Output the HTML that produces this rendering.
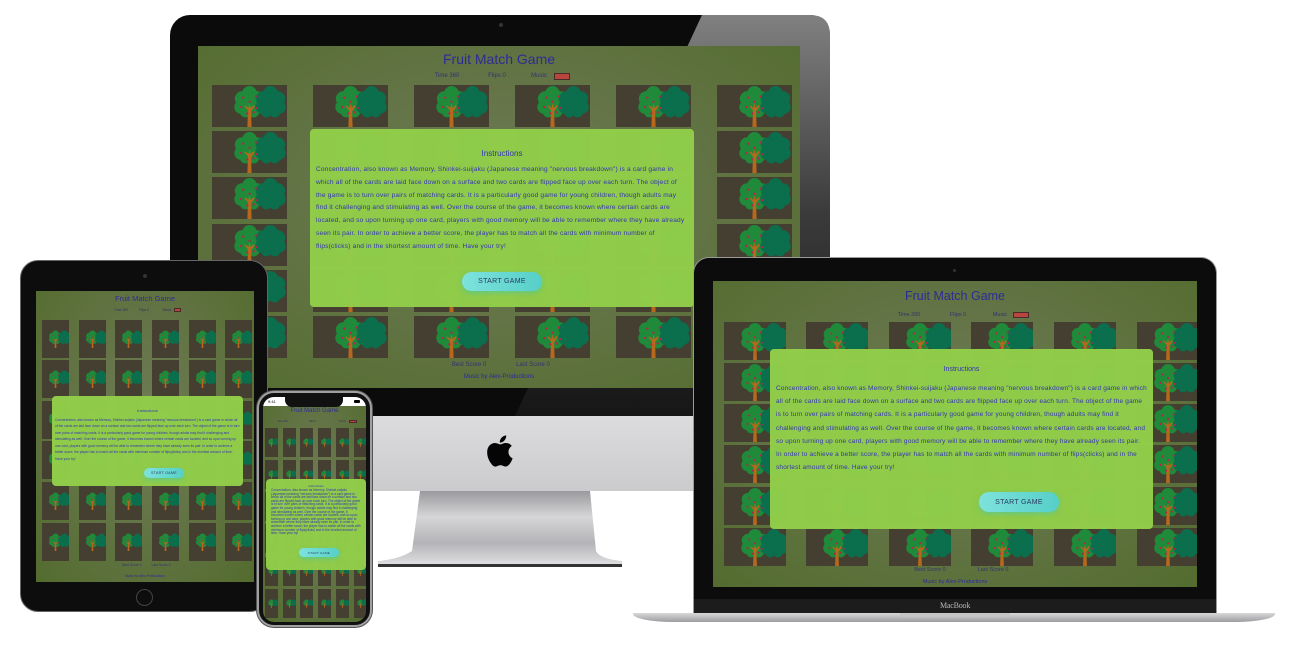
<!DOCTYPE html>
<html><head><meta charset="utf-8">
<style>
*{margin:0;padding:0;box-sizing:border-box}
body{width:1300px;height:650px;background:#fff;position:relative;overflow:hidden;font-family:"Liberation Sans",sans-serif}
.a{position:absolute}
.scr{position:absolute;overflow:hidden;background:radial-gradient(ellipse at 50% 45%,#6f7b55 0%,#637446 45%,#536c2e 100%)}
.card{position:absolute;background:#453f31}
.card svg{position:absolute;left:0;top:0;width:100%;height:100%}
.ov{position:absolute;background:rgba(146,206,74,0.97);border-radius:4px;color:#3434b4}
.t{position:absolute;white-space:nowrap;color:#2c2c96;transform:translateX(-50%)}
.btn{position:absolute;background:linear-gradient(90deg,#7ee2dc,#56cfc8);border-radius:20px;color:#2a3a60;display:flex;align-items:center;justify-content:center;letter-spacing:.3px;box-shadow:0 2px 4px rgba(60,200,190,.5)}
.box{position:absolute;background:#b8463e;border:1px solid #4a2a2a}
</style></head><body>

<div class="a" style="left:170px;top:15px;width:660px;height:401px;background:#0b0b0b;border-radius:20px 20px 0 0"></div>
<svg class="a" style="left:170px;top:15px" width="660" height="401">
<defs><linearGradient id="gl" x1="0" y1="0" x2="0" y2="1"><stop offset="0" stop-color="#808080"/><stop offset=".5" stop-color="#3a3a3a"/><stop offset="1" stop-color="#161616"/></linearGradient></defs>
<path d="M532 0 L640 0 Q660 0 660 20 L660 401 L345 401 Z" fill="url(#gl)"/>
</svg>
<div class="a" style="left:499px;top:23px;width:4px;height:4px;border-radius:50%;background:#333"></div>
<div class="a" style="left:170px;top:416px;width:660px;height:75px;background:linear-gradient(180deg,#dcdcde,#cbcbcd)"></div>
<svg class="a" style="left:483px;top:432px" width="34" height="38" viewBox="0 0 24 24"><path fill="#050505" d="M16.365 1.43c0 1.14-.493 2.27-1.177 3.08-.744.9-1.99 1.570-2.987 1.570-.12 0-.23-.02-.3-.03-.01-.06-.04-.22-.04-.39 0-1.15.572-2.270 1.206-2.980.804-.94 2.142-1.640 3.248-1.680.03.13.05.28.05.43zm4.565 15.71c-.03.07-.463 1.58-1.518 3.12-.945 1.34-1.94 2.710-3.43 2.710-1.517 0-1.9-.88-3.63-.88-1.698 0-2.302.91-3.67.91-1.377 0-2.332-1.26-3.428-2.8-1.287-1.82-2.323-4.63-2.323-7.28 0-4.28 2.797-6.55 5.552-6.55 1.448 0 2.675.95 3.6.95.865 0 2.222-1.01 3.902-1.01.613 0 2.886.06 4.374 2.19-.13.09-2.383 1.37-2.383 4.19 0 3.26 2.854 4.42 2.955 4.45z"/></svg>
<svg class="a" style="left:370px;top:491px" width="260" height="80">
<defs><linearGradient id="st" x1="0" y1="0" x2="0" y2="1"><stop offset="0" stop-color="#9a9a9e"/><stop offset=".35" stop-color="#d6d6d8"/><stop offset=".7" stop-color="#b4b4b8"/><stop offset="1" stop-color="#e0e0e2"/></linearGradient></defs>
<path d="M50 0 L220 0 L226 60 Q230 68 252 70 L252 74 L8 74 L8 70 Q30 68 42 60 Z" fill="url(#st)"/>
<rect x="8" y="73" width="244" height="3" fill="#333"/>
</svg>
<div class="scr" id="s1" style="left:198px;top:46px;width:602px;height:342px"></div>

<div class="a" style="left:20px;top:260px;width:248px;height:352px;background:#0d0d0d;border-radius:18px;border:1px solid #666"></div>
<div class="a" style="left:143px;top:274px;width:4px;height:4px;border-radius:50%;background:#333"></div>
<div class="a" style="left:136px;top:589px;width:17px;height:17px;border-radius:50%;border:1px solid #444"></div>
<div class="scr" id="s2" style="left:36px;top:291px;width:218px;height:291px"></div>

<div class="a" style="left:693px;top:257px;width:524px;height:358px;background:#0c0c0c;border-radius:16px 16px 0 0;border:1px solid #9a9a9a;border-bottom:none"></div>
<div class="a" style="left:953px;top:269px;width:3px;height:3px;border-radius:50%;background:#333"></div>
<div class="a" style="left:694px;top:599px;width:522px;height:15px;background:#1c1c1c"></div>
<div class="a" style="left:940px;top:601px;font-size:8px;color:#b8b8b8;letter-spacing:-.2px;font-family:'Liberation Serif',serif">MacBook</div>
<div class="a" style="left:633px;top:613px;width:642px;height:9px;background:linear-gradient(180deg,#d8d8da,#9c9c9e);border-radius:0 0 40px 40px/0 0 8px 8px"></div>
<div class="a" style="left:900px;top:613px;width:110px;height:4px;background:#c4c4c6;border-radius:0 0 5px 5px"></div>
<div class="scr" id="s3" style="left:713px;top:281px;width:484px;height:306px"></div>

<div class="a" style="left:257px;top:391px;width:115px;height:236px;background:#111;border-radius:17px;border:2px solid #a0a0a0;box-shadow:0 0 0 1px #555"></div>
<div class="scr" id="s4" style="left:263px;top:397px;width:103px;height:225px;border-radius:11px"></div>

<script>
var TXT='Concentration, also known as Memory, Shinkei-suijaku (Japanese meaning "nervous breakdown") is a card game in which all of the cards are laid face down on a surface and two cards are flipped face up over each turn. The object of the game is to turn over pairs of matching cards. It is a particularly good game for young children, though adults may find it challenging and stimulating as well. Over the course of the game, it becomes known where certain cards are located, and so upon turning up one card, players with good memory will be able to remember where they have already seen its pair. In order to achieve a better score, the player has to match all the cards with minimum number of flips(clicks) and in the shortest amount of time. Have your try!';
function tree(par){
 var c=[[20,8,7],[13,13,7],[27,13,7],[12,21,6.5],[28,21,6.5],[20,17,9],[16,26,5],[24,26,5]];
 var L='',R='';
 c.forEach(function(p){L+='<circle cx="'+p[0]+'" cy="'+p[1]+'" r="'+p[2]+'" fill="#1f8a3a"/>';R+='<circle cx="'+p[0]+'" cy="'+p[1]+'" r="'+p[2]+'" fill="#0b6e4c"/>';});
 var d=[[14,12],[20,16],[26,11],[12,21],[27,22],[18,27],[24,26]],D='';
 d.forEach(function(p){D+='<circle cx="'+p[0]+'" cy="'+p[1]+'" r="1.1" fill="#c0204e"/>';});
 return '<svg viewBox="-10 0 60 40" preserveAspectRatio="'+par+' meet">'+L+'<svg x="20" y="0" width="20" height="40" viewBox="20 0 20 40">'+R+'</svg><path d="M18 40 L18.5 24 L15 20 L16 19.5 L19 22 L20 17 L21 22 L24 19 L25 20 L21.5 25 L22 40 Z" fill="#b8681c"/>'+D+'</svg>';
}
var TB=tree('xMidYMax'),TM=tree('xMidYMid');
function build(id,c){
 var s=document.getElementById(id),h='',T=c.mid?TM:TB;
 if(c.status){h+='<div class="a" style="left:0;top:0;width:100%;height:'+c.status+'px;background:#fff"></div><div class="a" style="left:22px;top:0;width:58px;height:'+(c.status+1)+'px;background:#111;border-radius:0 0 7px 7px"></div><div class="a" style="left:5px;top:2px;font-size:4px;color:#000">9:41</div><div class="a" style="left:91px;top:2.5px;width:6px;height:3px;background:#000;border-radius:1px"></div>';}
 c.rows.forEach(function(y){c.cols.forEach(function(x){h+='<div class="card" style="left:'+x+'px;top:'+y+'px;width:'+c.cw+'px;height:'+c.rh+'px">'+T+'</div>';});});
 var m=c.w/2;
 h+='<div class="t" style="left:'+m+'px;top:'+c.ty+'px;font-size:'+c.ts+'px">Fruit Match Game</div>';
 var st=c.st;
 h+='<div class="t" style="left:'+(m+st[0])+'px;top:'+c.sy+'px;font-size:'+c.ss+'px;color:#33336e">Time 360</div>';
 h+='<div class="t" style="left:'+(m+st[1])+'px;top:'+c.sy+'px;font-size:'+c.ss+'px;color:#33336e">Flips 0</div>';
 h+='<div class="t" style="left:'+(m+st[2])+'px;top:'+c.sy+'px;font-size:'+c.ss+'px;color:#33336e">Music</div>';
 h+='<div class="box" style="left:'+(m+st[3])+'px;top:'+(c.sy+c.ss*0.05)+'px;width:'+c.bw+'px;height:'+(c.ss*1.1)+'px"></div>';
 h+='<div class="t" style="left:'+(m+c.bo[0])+'px;top:'+c.by+'px;font-size:'+c.ss+'px;color:#33336e">Best Score 0</div>';
 h+='<div class="t" style="left:'+(m+c.bo[1])+'px;top:'+c.by+'px;font-size:'+c.ss+'px;color:#33336e">Last Score 0</div>';
 h+='<div class="t" style="left:'+m+'px;top:'+c.my+'px;font-size:'+c.ss+'px;color:#2a2aa0">Music by Alex-Productions</div>';
 var o=c.ov;
 h+='<div class="ov" style="left:'+o[0]+'px;top:'+o[1]+'px;width:'+o[2]+'px;height:'+o[3]+'px">'+
 '<div class="t" style="left:50%;top:'+c.iy+'px;font-size:'+c.is+'px;color:#3434b4">Instructions</div>'+
 '<div class="a" style="left:'+c.pad+'px;right:'+c.pad+'px;top:'+c.py+'px;font-size:'+c.ps+'px;line-height:'+c.lh+'px;letter-spacing:'+(c.ls||0)+'px">'+TXT+'</div>'+
 '<div class="btn" style="left:'+c.btn[0]+'px;top:'+c.btn[1]+'px;width:'+c.btn[2]+'px;height:'+c.btn[3]+'px;font-size:'+c.bs+'px">START GAME</div></div>';
 s.innerHTML=h;
}
build('s1',{w:602,cols:[14,115,216,317,418,519],cw:75,rows:[39,85,131,178,224,270],rh:42,ty:5,ts:14,sy:27,ss:6,st:[-52,-2,40,55],bw:16,bo:[-30,34],by:316,my:328,
 ov:[112,83,384,178],iy:20,is:8,pad:6,py:35,ps:6.55,lh:12.8,ls:0.2,btn:[152,143,80,19],bs:7});
build('s2',{w:218,mid:1,cols:[6,43,79,116,153,189],cw:27,rows:[29,69,110,150,191,232],rh:38,ty:3,ts:7.5,sy:17,ss:3.4,st:[-24,-1,22,29],bw:7,bo:[-13,16],by:272,my:283,
 ov:[16,105,191,90],iy:12,is:4,pad:3,py:20.5,ps:3.3,lh:6.6,btn:[92,72,40,10],bs:3.6});
build('s3',{w:484,cols:[11,93,176,258,341,424],cw:62,rows:[41,82,123,164,206,247],rh:38,ty:8,ts:12.5,sy:31,ss:5.5,st:[-46,3,45,58],bw:16,bo:[-25,38],by:286,my:298,
 ov:[57,68,383,180],iy:17,is:7,pad:6,py:33,ps:6.45,lh:13.2,ls:0.2,btn:[209,143,80,20],bs:7});
build('s4',{w:103,mid:1,status:9,cols:[2,20,37,55,73,91],cw:13,rows:[31,63,95,127,160,192],rh:29,ty:11,ts:6,sy:23,ss:2.5,st:[-32,-2,28,34],bw:8,bo:[-18,18],by:225,my:240,
 ov:[3,82,100,91],iy:5,is:3,pad:5,py:10,ps:3.15,lh:3.6,btn:[33,69,40,9],bs:3});
</script>
</body></html>
